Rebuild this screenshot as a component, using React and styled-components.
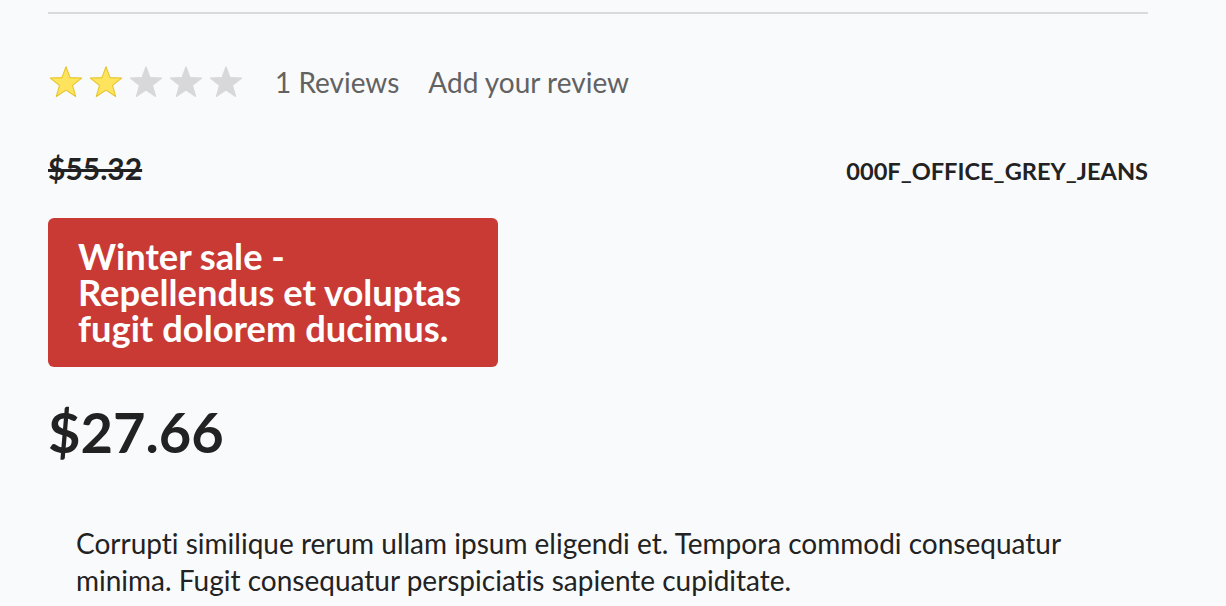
import React from "react";
import styled, { createGlobalStyle } from "styled-components";

const GlobalStyle = createGlobalStyle`
  html, body {
    margin: 0;
    padding: 0;
    background: #f9fafc;
    font-family: Lato, "Open Sans", sans-serif;
    font-variant-ligatures: none;
    color: #222;
  }
`;

const Page = styled.div`
  width: 1100px;
  padding: 12px 48px 0;
`;

const Divider = styled.hr`
  margin: 0;
  border: none;
  border-top: 2px solid #dadadd;
`;

const ReviewRow = styled.div`
  display: flex;
  align-items: center;
  margin-top: 48px;
  height: 40px;
`;

const Stars = styled.div`
  display: flex;
  gap: 4px;
  margin-right: 31px;
`;

const ReviewLink = styled.a`
  font-size: 28px;
  line-height: 40px;
  color: #626262;
  text-decoration: none;
  margin-right: 29px;
`;

const PriceRow = styled.div`
  display: flex;
  justify-content: space-between;
  align-items: baseline;
  margin-top: 48px;
  line-height: 36px;
`;

const OldPrice = styled.span`
  font-size: 30px;
  font-weight: 700;
  color: #222;
  text-decoration: line-through;
`;

const Sku = styled.span`
  font-size: 23.6px;
  font-weight: 700;
  color: #222;
`;

const SaleBanner = styled.div`
  margin-top: 29px;
  width: 450px;
  box-sizing: border-box;
  padding: 20px 30px 21px;
  background: #c93a35;
  border-radius: 6px;
  color: #fff;
  font-size: 36.3px;
  font-weight: 700;
  line-height: 36px;
`;

const FinalPrice = styled.div`
  margin-top: 30px;
  font-size: 56px;
  font-weight: 700;
  color: #222;
  line-height: 70px;
`;

const Description = styled.p`
  margin: 58px 0 0 28px;
  font-size: 28px;
  line-height: 37px;
  color: #222;
  max-width: 1010px;
`;

const Star = ({ filled }) => (
  <svg width="36" height="36" viewBox="0 0 24 24">
    <path
      d="M12 1.8L14.7 9.08L22.46 9.4L16.37 14.22L18.47 21.7L12 17.4L5.53 21.7L7.63 14.22L1.54 9.4L9.3 9.08Z"
      fill={filled ? "#fde45c" : "#d8d8da"}
      stroke={filled ? "#e6c32a" : "#d8d8da"}
      strokeWidth="0.7"
      strokeLinejoin="round"
    />
  </svg>
);

export default function App() {
  const rating = 2;
  return (
    <>
      <GlobalStyle />
      <Page>
        <Divider />
        <ReviewRow>
          <Stars>
            {[1, 2, 3, 4, 5].map((i) => (
              <Star key={i} filled={i <= rating} />
            ))}
          </Stars>
          <ReviewLink href="#">1 Reviews</ReviewLink>
          <ReviewLink href="#">Add your review</ReviewLink>
        </ReviewRow>
        <PriceRow>
          <OldPrice>$55.32</OldPrice>
          <Sku>000F_OFFICE_GREY_JEANS</Sku>
        </PriceRow>
        <SaleBanner>
          Winter sale -<br />
          Repellendus et voluptas fugit dolorem ducimus.
        </SaleBanner>
        <FinalPrice>$27.66</FinalPrice>
        <Description>
          Corrupti similique rerum ullam ipsum eligendi et. Tempora commodi consequatur
          minima. Fugit consequatur perspiciatis sapiente cupiditate.
        </Description>
      </Page>
    </>
  );
}
